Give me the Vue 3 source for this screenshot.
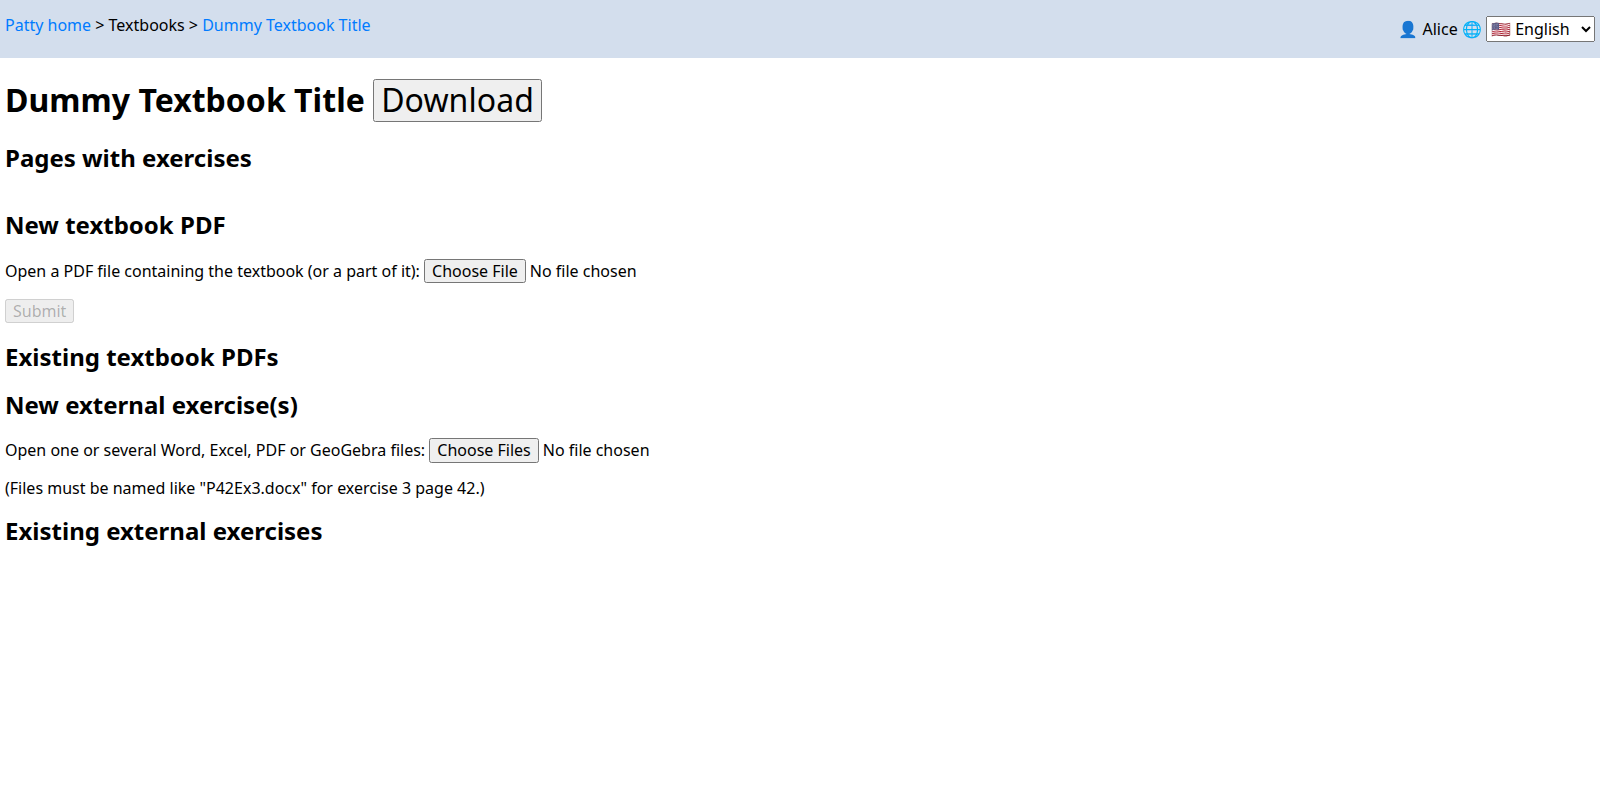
<script setup>
import { ref } from 'vue'
const lang = ref('en')
</script>

<template>
  <div class="page">
    <nav class="bar">
      <p class="crumbs"><a>Patty home</a> &gt; Textbooks &gt; <a>Dummy Textbook Title</a></p>
      <p class="user">👤 Alice 🌐 <select v-model="lang"><option value="en">🇺🇸 English</option><option value="fr">🇫🇷 Français</option></select></p>
    </nav>
    <main>
      <h1>Dummy Textbook Title <button>Download</button></h1>
      <h2>Pages with exercises</h2>
      <div class="pages"></div>
      <h2>New textbook PDF</h2>
      <p>Open a PDF file containing the textbook (or a part of it): <input type="file" /></p>
      <p><button disabled>Submit</button></p>
      <h2>Existing textbook PDFs</h2>
      <h2>New external exercise(s)</h2>
      <p>Open one or several Word, Excel, PDF or GeoGebra files: <input type="file" multiple /></p>
      <p>(Files must be named like "P42Ex3.docx" for exercise 3 page 42.)</p>
      <h2>Existing external exercises</h2>
    </main>
  </div>
</template>

<style scoped>
.page {
  font-family: "Noto Sans", sans-serif;
  font-size: 16px;
  line-height: 1.15;
}
.bar {
  display: flex;
  justify-content: space-between;
  background: #d3deed;
  padding: 0 5px;
}
a {
  color: #007bff;
}
main {
  padding: 0 5px;
}
h1 {
  margin: 0.67em 0;
  letter-spacing: 0.03px;
}
h1 button {
  letter-spacing: 0.06px;
}
button,
input,
select {
  margin: 0;
  font-family: inherit;
  font-size: 100%;
  line-height: 1.15;
}
input::file-selector-button {
  box-sizing: border-box;
  height: 24.4px;
  padding: 0 7px;
  border: 1px solid #767676;
  border-radius: 2.5px;
  background: #efefef;
  font: inherit;
}
.pages {
  display: flow-root;
}
</style>
